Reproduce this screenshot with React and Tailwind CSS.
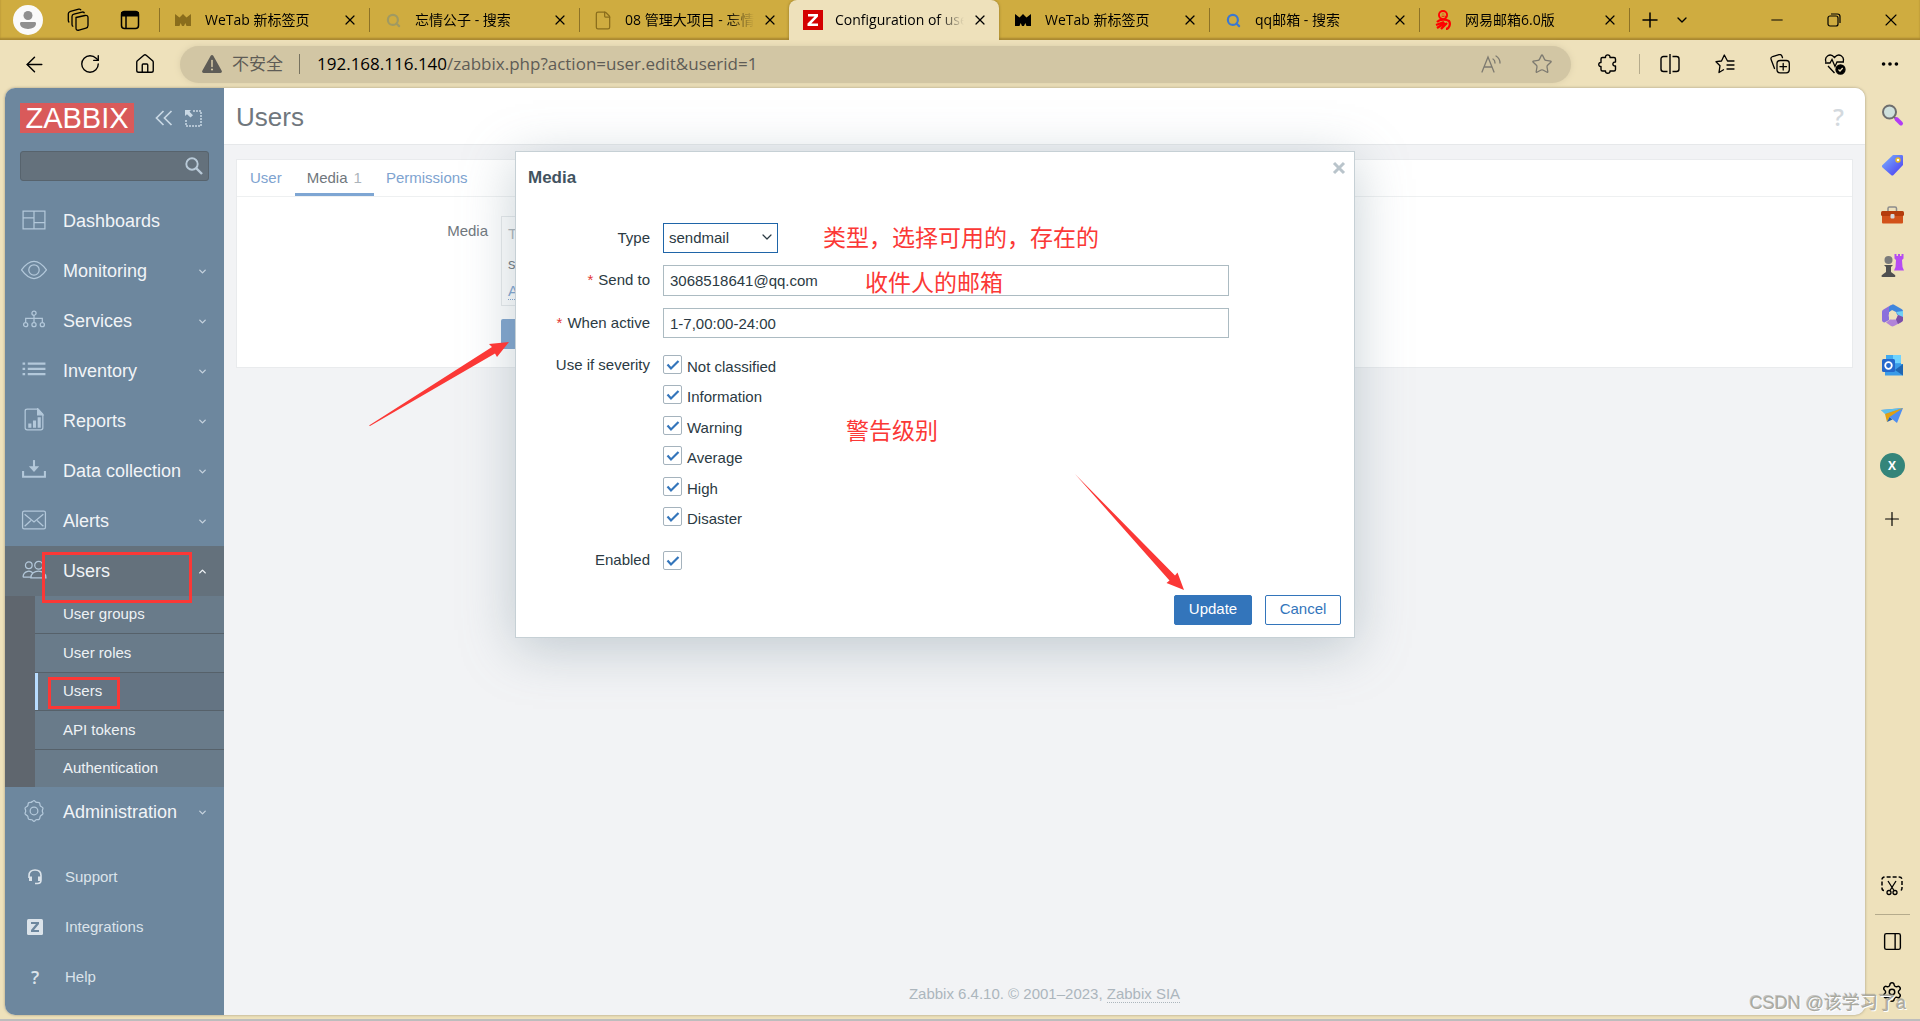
import {
  ArrowLeft,
  ChevronDown,
  ChevronUp,
  Ellipsis,
  File,
  House,
  Minus,
  PanelRight,
  Plus,
  RotateCw,
  Search,
  Settings,
  Star,
  X,
} from "lucide-react";

const uiFont = "font-['Open_Sans','Noto_Sans_CJK_SC',sans-serif]";
const pageFont = "font-['Liberation_Sans','Noto_Sans_CJK_SC',sans-serif]";

/* ---------- browser icons ---------- */

const Crown = ({ className }) => (
  <svg viewBox="0 0 16 14" className={`h-3.5 w-4 ${className}`} fill="currentColor">
    <path d="M0 1l4.500 3.500L8 1l3.500 3.500L16 1v12h-4.500L10.300 10 9 13H7L5.700 10 4.500 13H0z" />
  </svg>
);

const ZabbixFavicon = () => (
  <svg viewBox="0 0 20 20" className="h-5 w-5">
    <rect width="20" height="20" fill="#d40000" />
    <path d="M5 4h10v2.500L8.300 13.500H15V16H4.500v-2.500L11.500 6.500H5z" fill="#fff" />
  </svg>
);

const NeteaseFavicon = () => (
  <svg viewBox="0 0 18 20" className="h-5 w-4.5" fill="none">
    <circle cx="9" cy="5" r="5" fill="#f00" />
    <path d="M6.500 5h5c0-3-5-3-5 0 0 3 3.500 3 4.500 1.500" stroke="#cfac40" strokeWidth="1.300" />
    <path d="M3 12c3-3 9-3 12-1 2 3 0 8-3 8M2 15l8-3M3 18l8-5M7 19l6-6" stroke="#f00" strokeWidth="2.300" />
  </svg>
);

const Workspaces = () => (
  <svg viewBox="0 0 22 24" className="h-6 w-5.5" fill="none" stroke="currentColor" strokeWidth="1.300">
    <path d="M9 9.500l9-2c2-.4 3 .3 3 2v8c0 1.500-.5 2.200-2 2.600l-7 2c-2 .5-3-.2-3-1.800z" />
    <path d="M17.500 5.300c-.3-1-1.200-1.500-2.500-1.200L7 6.200C5.500 6.600 5 7.200 5 8.500v8c0 1 .5 1.700 1.300 2" />
    <path d="M14 2.200c-.3-.9-1.200-1.300-2.300-1L3.500 3.300C2 3.700 1.300 4.400 1.300 5.800v6.700c0 1 .4 1.600 1 1.900" />
  </svg>
);

const TabActions = () => (
  <svg viewBox="0 0 20 20" className="h-5 w-5" fill="none" stroke="currentColor" strokeWidth="1.500">
    <rect x="1.500" y="1.500" width="17" height="17" rx="3" />
    <path d="M2 3h16v2.500H2z" fill="currentColor" strokeWidth="2" />
    <path d="M6 6v12" />
  </svg>
);

const Warning = () => (
  <svg viewBox="0 0 20 18" className="h-4.5 w-5">
    <path d="M8.700.8c.6-1 2-1 2.600 0l8.400 15c.6 1-.1 2.200-1.300 2.200H1.600C.4 18-.3 16.800.3 15.800z" fill="#5e5c56" />
    <path d="M10 5.500v6" stroke="#d2c6a4" strokeWidth="1.600" strokeLinecap="round" />
    <circle cx="10" cy="14.500" r="1.100" fill="#d2c6a4" />
  </svg>
);

const ReadAloud = () => (
  <svg viewBox="0 0 20 18" className="h-4.5 w-5" fill="none" stroke="currentColor" strokeWidth="1.300" strokeLinecap="round">
    <path d="M1 17L7 2l6 15M3.200 12h7.600M12 4c1.500.8 2 2.200 2 4M15 1c2.500 1.500 4 4 4 7" />
  </svg>
);

const Extensions = () => (
  <svg viewBox="0 0 20 20" className="h-5 w-5" fill="none" stroke="currentColor" strokeWidth="1.400" strokeLinejoin="round">
    <path d="M4.500 3.500h3c-.5-3.500 5-3.500 4.500 0h4c1 0 1.500.5 1.500 1.500v3c-3.500-.5-3.500 4.500 0 4v3.500c0 1-.5 1.500-1.500 1.500h-4c.5 3-5 3-4.500 0h-3C3.500 17 3 16.500 3 15.500v-3c-3 .5-3-4.500 0-4V5c0-1 .5-1.500 1.500-1.500z" />
  </svg>
);

const SplitScreen = () => (
  <svg viewBox="0 0 20 20" className="h-5 w-5" fill="none" stroke="currentColor" strokeWidth="1.400">
    <path d="M7.500 2.500H3.500C2 2.500 1 3.500 1 5v10c0 1.500 1 2.500 2.500 2.500h4M12.500 2.500h4C18 2.500 19 3.500 19 5v10c0 1.500-1 2.500-2.500 2.500h-4M10 0v20" />
  </svg>
);

const Favorites = () => (
  <svg viewBox="0 0 20 20" className="h-5 w-5" fill="none" stroke="currentColor" strokeWidth="1.300" strokeLinejoin="round" strokeLinecap="round">
    <path d="M12.500 7L9.300 1 6.500 7 1 7.700l4 4L4 18.500l4.500-2.700M13 7h6M12 11h7M12 15h7" />
  </svg>
);

const Collections = () => (
  <svg viewBox="0 0 20 20" className="h-5 w-5" fill="none" stroke="currentColor" strokeWidth="1.300" strokeLinecap="round">
    <rect x="7" y="6.500" width="12.300" height="12.300" rx="3" />
    <path d="M13.200 9.500v6.500M10 12.700h6.500M4.500 14.500L1.200 5.800C.6 4.200 1.100 3 2.600 2.500l6.400-1.800c1.500-.4 2.500 0 3 1.500l.5 1.500" />
  </svg>
);

const Health = () => (
  <svg viewBox="0 0 22 22" className="h-5.5 w-5.5" fill="none" stroke="currentColor" strokeWidth="1.300">
    <path d="M2 9C0 4 6-1 10.500 4.500 15-1 21 4 19 9M1 10h5l2-3.500 3 7L13 9h7M4 13l6.500 7" />
    <circle cx="16.500" cy="16.500" r="4.500" fill="currentColor" />
    <path d="M14.500 16.500l1.500 1.500 2.700-3" stroke="#eee1bb" />
  </svg>
);

/* ---------- edge sidebar icons ---------- */

const edgeIcons = [
  {
    name: "Search",
    art: (
      <>
        <circle cx="8.500" cy="8" r="6.500" fill="#cfe0dc" stroke="#6e6e6e" strokeWidth="2" />
        <path d="M13 13l3 2.500" stroke="#6e6e6e" strokeWidth="2" />
        <path d="M15.500 15l4.500 4.500" stroke="#b23cf5" strokeWidth="4" strokeLinecap="round" />
      </>
    ),
  },
  {
    name: "Shopping",
    art: (
      <>
        <path d="M12 1h8.500c1 0 1.500.5 1.500 1.500V11L12.500 21c-.8.800-1.600.800-2.400 0L1.500 13.500c-.8-.8-.8-1.600 0-2.400z" fill="url(#tagFill)" />
        <circle cx="17" cy="6" r="2" fill="#fff" stroke="#e8b923" strokeWidth="1.400" />
      </>
    ),
  },
  {
    name: "Tools",
    art: (
      <>
        <path d="M7 7V4.500C7 3.500 7.500 3 8.500 3h5.500c1 0 1.500.5 1.500 1.500V7" fill="none" stroke="#8c8c8c" strokeWidth="1.500" />
        <rect x="1" y="10" width="21" height="9.500" rx="1" fill="#d2521a" />
        <rect x="0" y="7" width="23" height="5" rx="1.500" fill="#b43c0c" />
        <rect x="9.500" y="10" width="4" height="4.500" rx="1" fill="#d5d9dc" />
      </>
    ),
  },
  {
    name: "Games",
    art: (
      <>
        <path d="M13.500 0v4.500l1.500 1.500-.5 7-1.500 3.500h10l-1.500-3.500-.5-7L22.500 4.500V0h-2v2h-1.500V0h-2v2h-1.500V0z" fill="#b64cf2" />
        <circle cx="7.500" cy="6" r="4" fill="#7b7b7b" />
        <path d="M3 11h9l-2 2v5l4 3c1 1.500 0 2-1 2H1.500C.5 23 0 22 1 21l4-3v-5z" fill="#4f4f4f" />
      </>
    ),
  },
  {
    name: "Microsoft 365",
    art: (
      <>
        <path d="M10 1L2.500 5.500C1.500 6 1 7 1 8v8c0 1.500 1 2.500 2.500 2.500L8 16V8l4-3z" fill="#8a6fdc" />
        <path d="M8 3l2.500-2c1-.6 2-.6 3 0L20.500 5c1 .6 1.500 1.500 1.500 2.500V14l-6-3.500-1-2.500-4-2-3 2z" fill="#3f86dd" />
        <path d="M15 8l7-1v8l-3-2z" fill="#6fd0f5" />
        <path d="M22 13v2.500c0 1-.5 2-1.500 2.500l-7.500 4c-1 .5-2 .5-3 0l-5-3.500 4-3h6l2-4.500z" fill="#b183d8" />
        <path d="M22 13v2.500c0 1-.5 2-1.500 2.500L17 20l-2-4.500 2-4.500z" fill="#7a4fa8" />
        <circle cx="11.500" cy="11.500" r="3.800" fill="#eee1bb" />
      </>
    ),
  },
  {
    name: "Outlook",
    art: (
      <>
        <rect x="5" y="1" width="15" height="12" fill="#3fa9f0" />
        <path d="M12 1h8v8h-8z" fill="#6fd3ff" />
        <path d="M4 10h18v11.500H4z" fill="#3a9be8" />
        <path d="M22 10v11.500L14 16z" fill="#1f66b3" />
        <rect x="1" y="5" width="13" height="13" rx="1.500" fill="#2468cc" />
        <circle cx="7.500" cy="11.500" r="3.300" fill="none" stroke="#fff" strokeWidth="1.800" />
      </>
    ),
  },
  {
    name: "Drop",
    art: (
      <>
        <path d="M0 6l22-2-6 15-5-4z" fill="#4e8ef0" />
        <path d="M0 6l22-2L4 10z" fill="#5fc0ea" />
        <path d="M22 4L4 10l2 8 2.500-5z" fill="#e0a010" />
        <path d="M6 18l2.500-5 3 2.500z" fill="#1f5fb0" />
      </>
    ),
  },
];

/* ---------- zabbix menu icons ---------- */

const MenuIcon = ({ name }) => {
  const art = {
    Dashboards: <path d="M2 3h21v17H2zM12.500 3v17M2 9.500h10.500M12.500 14H23" />,
    Monitoring: (
      <>
        <path d="M.5 11.500Q12.500-5 24.500 11.500 12.500 28 .5 11.500z" />
        <circle cx="12.500" cy="11.500" r="5" />
      </>
    ),
    Services: (
      <>
        <circle cx="12.500" cy="5" r="2" />
        <circle cx="4.500" cy="16" r="2" />
        <circle cx="12.500" cy="16" r="2" />
        <circle cx="20.500" cy="16" r="2" />
        <path d="M12.500 7v7M4.500 14v-4h16v4" />
      </>
    ),
    Inventory: (
      <g strokeWidth="2.200">
        <path d="M6.500 5.500H23.500M6.500 10.500H23.500M6.500 15.500H23.500" />
        <path d="M1.500 5.500h2.500M1.500 10.500h2.500M1.500 15.500h2.500" />
      </g>
    ),
    Reports: (
      <>
        <path d="M6 1h10.500l4.500 5v13c0 1.500-.5 2-2 2H6c-1.500 0-2-.5-2-2V3c0-1.500.5-2 2-2z" />
        <path d="M16 1l5 5.500h-5z" fill="currentColor" />
        <path d="M8.500 19v-4M13 19v-7M17.500 19V9" strokeWidth="3" />
      </>
    ),
    "Data collection": (
      <>
        <path d="M12.500 2v9" strokeWidth="2" />
        <path d="M7.500 8h10l-5 5.500z" fill="currentColor" stroke="none" />
        <path d="M2 12.500V18h21v-5.500" strokeWidth="2" />
      </>
    ),
    Alerts: (
      <>
        <rect x="1.500" y="3" width="22" height="17" rx="1.500" />
        <path d="M3.500 6l9 7.500 9-7.500M3.500 17.500l6-5.500M21.500 17.500l-6-5.500" />
      </>
    ),
    Users: (
      <>
        <circle cx="7.500" cy="7" r="3.200" />
        <circle cx="17" cy="7" r="3.800" />
        <path d="M2 18.500c0-7 9-7 9-3.500M2 18.500h7M9.500 19c0-8.500 14.500-8.500 14.500 0z" />
      </>
    ),
    Administration: (
      <>
        <path d="M10.500 2.500c1 0 1-1 2-1s1 1 2 1.500 2 0 3 .5.500 2 1 3 2 1 2.500 2-.5 1.500-.5 3 1 2 .5 3-2 1-2.500 2 0 2-1 3-2 0-3 .5-1 1.500-2 1.500-1-1-2-1.500-2 0-3-.5-.5-2-1-3-2-1-2.500-2 .5-1.500.5-3-1-2-.5-3 2-1 2.500-2 0-2.500 1-3 2 0 3-.5z" />
        <circle cx="12.500" cy="11.500" r="3.700" />
      </>
    ),
  }[name];
  return (
    <svg viewBox="0 0 25 25" className="h-6.5 w-6.5 shrink-0 text-[#b3c8da]" fill="none" stroke="currentColor" strokeWidth="1.200">
      {art}
    </svg>
  );
};

const SupportIcon = () => (
  <svg viewBox="0 0 16 16" className="h-4 w-4" fill="none" stroke="currentColor" strokeWidth="1.600">
    <path d="M2 9V6.500C2 3 4.500 1 8 1s6 2 6 5.500V11c0 2-1.500 3.500-3.500 3.500H8" />
    <path d="M3.500 7.500V12M12.500 7.500V12" strokeWidth="3" />
  </svg>
);

const IntegrationsIcon = () => (
  <svg viewBox="0 0 16 16" className="h-4 w-4">
    <rect width="16" height="16" rx="1.500" fill="currentColor" />
    <path d="M4 3h8v2l-5 6h5v2H4v-2l5-6H4z" fill="#6d879e" />
  </svg>
);

/* ---------- data ---------- */

const tabs = [
  { title: "WeTab 新标签页", icon: <Crown className="text-[#8a6d1c]" />, line: true },
  { title: "忘情公子 - 搜索", icon: <Search size={15} strokeWidth={3.5} className="text-[#a09a62]" />, line: true },
  { title: "08 管理大项目 - 忘情公子", icon: <File size={21} strokeWidth={1.5} className="text-[#8a6d1c]" />, line: true },
  { title: "Configuration of users", icon: <ZabbixFavicon />, active: true },
  { title: "WeTab 新标签页", icon: <Crown className="text-black" /> },
  { title: "qq邮箱 - 搜索", icon: <Search size={15} strokeWidth={3.5} className="text-[#3b78d0]" />, line: true },
  { title: "网易邮箱6.0版", icon: <NeteaseFavicon />, line: true },
];

const menu = ["Dashboards", "Monitoring", "Services", "Inventory", "Reports", "Data collection", "Alerts"];
const userMenu = ["User groups", "User roles", "Users", "API tokens", "Authentication"];
const severities = ["Not classified", "Information", "Warning", "Average", "High", "Disaster"];

/* ---------- browser chrome ---------- */

const Tab = ({ title, icon, active, line }) => (
  <div
    className={`flex h-full max-w-[210px] flex-1 items-center pr-[11px] ${
      active ? "rounded-t-lg bg-[#eee1bb] shadow-[0_0_3px_#8d7226] [clip-path:inset(-4px_-4px_0_-4px)]" : ""
    }`}
  >
    <span className={`h-6 w-px ${line ? "bg-[#8d7226]" : ""}`} />
    <span className="ml-[13px] flex w-5 shrink-0 justify-center">{icon}</span>
    <span className="ml-3 flex-1 overflow-hidden text-sm whitespace-nowrap [mask-image:linear-gradient(to_right,#000_80%,transparent)]">
      {title}
    </span>
    <button aria-label="Close tab" className="ml-2">
      <X size={16} strokeWidth={1.8} />
    </button>
  </div>
);

const TabBar = () => (
  <div className="flex h-10 shrink-0 items-center bg-[#cfac40] shadow-[inset_0_-2px_2px_#a88730]">
    <div className="flex w-[159px] items-center pl-[13px]">
      <button aria-label="Profile" className="flex h-[30px] w-[30px] items-center justify-center rounded-full bg-[#fafafa]">
        <svg viewBox="0 0 16 18" className="h-4.5 w-4" fill="#8f8f8f">
          <circle cx="8" cy="4.500" r="4.500" />
          <path d="M1.500 11h13c1 0 1.500.6 1.500 1.600C16 16 12.500 18 8 18s-8-2-8-5.400C0 11.600.5 11 1.500 11z" />
        </svg>
      </button>
      <button aria-label="Workspaces" className="ml-6">
        <Workspaces />
      </button>
      <button aria-label="Tab actions" className="ml-[31px]">
        <TabActions />
      </button>
    </div>
    {tabs.map((tab, i) => (
      <Tab key={i} {...tab} />
    ))}
    <span className="h-6 w-px bg-[#8d7226]" />
    <button aria-label="New tab" className="ml-2">
      <Plus size={24} strokeWidth={1.5} />
    </button>
    <button aria-label="Tab list" className="ml-3">
      <ChevronDown size={16} strokeWidth={2} />
    </button>
    <div className="ml-auto flex items-center pr-px">
      <button aria-label="Minimize" className="flex w-[57px] justify-center">
        <Minus size={18} strokeWidth={1.3} />
      </button>
      <button aria-label="Restore" className="flex w-[57px] justify-center">
        <svg viewBox="0 0 14 14" className="h-3.5 w-3.5" fill="none" stroke="currentColor" strokeWidth="1.200">
          <rect x="1" y="3" width="10" height="10" rx="2" />
          <path d="M4 1h6.500C12.300 1 13 2 13 3.500V10" />
        </svg>
      </button>
      <button aria-label="Close" className="flex w-[57px] justify-center">
        <X size={20} strokeWidth={1.3} />
      </button>
    </div>
  </div>
);

const ToolButton = ({ label, children }) => (
  <button aria-label={label} className="flex w-[55px] shrink-0 justify-center">
    {children}
  </button>
);

const Toolbar = () => (
  <div className="flex h-12 shrink-0 items-center bg-[#eee1bb] pr-[3px] pl-[7px]">
    <ToolButton label="Back">
      <ArrowLeft size={25} strokeWidth={1.4} />
    </ToolButton>
    <ToolButton label="Refresh">
      <RotateCw size={22} strokeWidth={1.5} />
    </ToolButton>
    <ToolButton label="Home">
      <House size={22} strokeWidth={1.5} />
    </ToolButton>
    <div className="mr-1.5 ml-2 flex h-[37px] flex-1 items-center rounded-full bg-[#d2c6a4] pl-[22px] text-[#5e5c56] shadow-[0_0_6px_#d9cda9]">
      <Warning />
      <span className="ml-2.5 text-[17px]">不安全</span>
      <span className="ml-4 h-5 w-px bg-[#77725f]" />
      <span className="ml-[17px] flex-1 text-[17px]">
        <span className="text-black">192.168.116.140</span>/zabbix.php?action=user.edit&amp;userid=1
      </span>
      <button aria-label="Read aloud" className="mr-[30px] text-[#7d7a70]">
        <ReadAloud />
      </button>
      <button aria-label="Favorite" className="mr-[18px] text-[#7d7a70]">
        <Star size={22} strokeWidth={1.4} />
      </button>
    </div>
    <button aria-label="Extensions" className="flex w-[62px] justify-center">
      <Extensions />
    </button>
    <span className="mr-0.5 h-5 w-px bg-[#b5ab8c]" />
    <ToolButton label="Split screen">
      <SplitScreen />
    </ToolButton>
    <ToolButton label="Favorites">
      <Favorites />
    </ToolButton>
    <ToolButton label="Collections">
      <Collections />
    </ToolButton>
    <ToolButton label="Browser essentials">
      <Health />
    </ToolButton>
    <ToolButton label="More">
      <Ellipsis size={22} strokeWidth={2} />
    </ToolButton>
  </div>
);

const EdgeSidebar = () => (
  <aside className="relative flex w-[55px] shrink-0 flex-col items-center pt-0.5 pr-px">
    {edgeIcons.map(({ name, art }) => (
      <button key={name} aria-label={name} className="flex h-[50px] w-full items-center justify-center">
        <svg viewBox="0 0 23 23" className="h-[23px] w-[23px]">
          <defs>
            <linearGradient id="tagFill" x1="0" y1="0" x2="1" y2="1">
              <stop offset="0" stopColor="#7ab6ff" />
              <stop offset="1" stopColor="#4a35f0" />
            </linearGradient>
          </defs>
          {art}
        </svg>
      </button>
    ))}
    <button className="mt-[13px] flex h-[25px] w-[25px] items-center justify-center rounded-full bg-[#34857a] text-xs font-bold text-white">
      X
    </button>
    <button aria-label="Add" className="mt-[30px]">
      <Plus size={22} strokeWidth={1.3} />
    </button>
    <button aria-label="Screenshot" className="mt-auto">
      <svg viewBox="0 0 22 20" className="h-5 w-5.5" fill="none" stroke="currentColor" strokeWidth="1.500">
        <path d="M3 14.500C1.500 14.500 1 13.500 1 12V4c0-2 .8-3 3-3h14c2 0 3 1 3 3v8c0 1.500-.5 2.500-2 2.500" strokeDasharray="4 2" />
        <path d="M7 5l6 9.500M15 5L9 14.500" strokeWidth="1.300" />
        <circle cx="8" cy="16.500" r="2" strokeWidth="1.300" />
        <circle cx="14" cy="16.500" r="2" strokeWidth="1.300" />
      </svg>
    </button>
    <span className="mt-4.5 h-px w-[35px] bg-[#b5ab8c]" />
    <button aria-label="Sidebar" className="mt-4">
      <PanelRight size={21} strokeWidth={1.6} />
    </button>
    <button aria-label="Settings" className="mt-[29px] mb-3">
      <Settings size={22} strokeWidth={1.6} />
    </button>
    <p
      className={`absolute right-3.5 bottom-0 text-lg leading-6 whitespace-nowrap text-[#a9a99f] [text-shadow:1px_1px_0_#fff,-1px_-1px_0_#77777766] ${pageFont}`}
    >
      CSDN @该学习了a
    </p>
  </aside>
);

/* ---------- zabbix page ---------- */

const MenuRow = ({ name, open }) => (
  <a
    href="#"
    className={`flex h-[50px] items-center pr-4 pl-4 text-lg text-[#f1f4f7] ${open ? "bg-[#64717c]" : ""}`}
  >
    <MenuIcon name={name} />
    <span className="ml-4 flex-1 whitespace-nowrap">{name}</span>
    {open && <ChevronUp size={11} strokeWidth={3} />}
    {!open && name !== "Dashboards" && <ChevronDown size={11} strokeWidth={3} className="text-[#c5d2dd]" />}
  </a>
);

const Sidebar = () => (
  <nav className="flex w-[219px] shrink-0 flex-col overflow-hidden rounded-l-[10px] bg-[#6d879e]">
    <div className="mt-[15px] flex items-center pr-[22px] pl-[15px]">
      <a href="#" className="flex h-[30px] w-[114px] items-center justify-center bg-[#d95a5a] text-[29px] leading-none text-white">
        ZABBIX
      </a>
      <button aria-label="Collapse sidebar" className="ml-[21px] text-[#c9d8e4]">
        <svg viewBox="0 0 18 16" className="h-4 w-4.5" fill="none" stroke="currentColor" strokeWidth="1.700">
          <path d="M8.500 1l-7 7 7 7M16.500 1l-7 7 7 7" />
        </svg>
      </button>
      <button aria-label="Hide sidebar" className="ml-3 text-[#c9d8e4]">
        <svg viewBox="0 0 17 17" className="h-[17px] w-[17px]" fill="none" stroke="currentColor" strokeWidth="1.500">
          <path d="M8 1h8v15H1V9" strokeDasharray="2 1" />
          <path d="M0 0h6L4.500 1.800 8 5.200 5.500 7.500 2 4.200 0 6z" fill="currentColor" stroke="none" />
        </svg>
      </button>
    </div>
    <div className="mx-[15px] mt-[18px] flex h-[30px] items-center rounded-[3px] border border-[#57636d] bg-[#64717c]">
      <input aria-label="Search" className="w-full flex-1 bg-transparent px-2 text-[15px] text-white outline-none" />
      <button aria-label="Search" className="mr-[5px] text-[#b9cad8]">
        <svg viewBox="0 0 18 18" className="h-4.5 w-4.5" fill="none" stroke="currentColor" strokeWidth="1.900">
          <circle cx="7" cy="7" r="5.700" />
          <path d="M11 11l6 6" strokeWidth="2.400" />
        </svg>
      </button>
    </div>

    <div className="mt-[15px]">
      {menu.map((name) => (
        <MenuRow key={name} name={name} />
      ))}
      <div className="relative">
        <MenuRow name="Users" open />
        <div className="flex bg-[#5f666e] pl-[30px]">
          <ul className="flex h-[191px] flex-1 flex-col divide-y divide-[#56616a] bg-[#697b8a]">
            {userMenu.map((name) => (
              <li key={name} className={`flex-1 ${name === "Users" ? "bg-[#647483]" : ""}`}>
                <a
                  href="#"
                  className={`flex h-full items-center text-[15px] text-[#eef2f5] ${
                    name === "Users" ? "border-l-3 border-[#b8dcff] pl-[25px]" : "pl-7"
                  }`}
                >
                  {name}
                </a>
              </li>
            ))}
          </ul>
        </div>
        <span className="absolute top-1.5 left-[37px] h-[51px] w-[150px] border-3 border-[#fb3836]" />
        <span className="absolute top-[131px] left-[43px] h-8 w-[72px] border-3 border-[#fb3836]" />
      </div>
      <MenuRow name="Administration" />
    </div>

    <div className="mt-[15px] text-[15px] text-[#dbe3ea]">
      <a href="#" className="flex h-[50px] items-center gap-[22px] pl-[22px]">
        <SupportIcon />
        Support
      </a>
      <a href="#" className="flex h-[50px] items-center gap-[22px] pl-[22px]">
        <IntegrationsIcon />
        Integrations
      </a>
      <a href="#" className="flex h-[50px] items-center gap-[22px] pl-[22px]">
        <span className="w-4 text-center font-['Open_Sans',sans-serif] text-lg font-semibold">?</span>
        Help
      </a>
    </div>
  </nav>
);

const UserForm = () => (
  <div className="mx-3 mt-3.5 border border-[#e9ebed] bg-white">
    <div className="flex h-[37px] items-stretch border-b border-[#eef0f1] text-[15px] text-[#7ea3d0]">
      <a href="#" className="flex items-center px-[13px]">User</a>
      <a href="#" className="flex items-center border-b-3 border-[#7ea6d3] px-3 pt-[3px] text-[#70777d]">
        Media<span className="ml-1.5 text-[#acb4ba]">1</span>
      </a>
      <a href="#" className="flex items-center px-3">Permissions</a>
    </div>
    <div className="flex pt-[19px] pb-[18px] text-[15px] text-[#70777d]">
      <div className="w-[251px] pt-1.5 text-right leading-[18px]">Media</div>
      <div className="ml-[13px]">
        <table className="w-[800px] border border-[#e6e9eb] text-left leading-5">
          <thead>
            <tr className="h-[34px]">
              <th className="px-1.5 font-normal text-[#acb4ba]">Type</th>
            </tr>
          </thead>
          <tbody>
            <tr className="h-[27px]">
              <td className="px-1.5">sendmail</td>
            </tr>
            <tr className="h-[28px]">
              <td className="px-1.5">
                <a href="#" className="border-b border-dotted border-[#7ea3d0] text-[#7ea3d0]">Add</a>
              </td>
            </tr>
          </tbody>
        </table>
        <button aria-label="Update" className="mt-[13px] block h-[30px] w-[78px] rounded-xs bg-[#7ea3cd]" />
      </div>
    </div>
  </div>
);

const Checkbox = ({ id }) => (
  <span className="relative flex h-[19px] w-[19px] shrink-0">
    <input
      id={id}
      type="checkbox"
      defaultChecked
      className="peer h-full w-full appearance-none rounded-xs border border-[#a5b3bd] bg-white"
    />
    <svg
      viewBox="0 0 19 19"
      className="pointer-events-none absolute inset-0 hidden peer-checked:block"
      fill="none"
      stroke="#3375bb"
      strokeWidth="2.200"
    >
      <path d="M4.500 9.500l3.500 4 7.500-7.500" />
    </svg>
  </span>
);

const Label = ({ htmlFor, required, children }) => (
  <label htmlFor={htmlFor} className="w-[134px] shrink-0 text-right">
    {required && <span className="mr-[5px] text-[#e33734]">*</span>}
    {children}
  </label>
);

const Note = ({ className, children }) => (
  <p className={`pointer-events-none absolute text-[23px] leading-7 whitespace-nowrap text-[#fb3836] ${className}`}>
    {children}
  </p>
);

const MediaDialog = () => (
  <div
    role="dialog"
    aria-label="Media"
    className="relative mt-[63px] h-fit w-[840px] border border-[#c6d0d5] bg-white text-[15px] text-[#2b3a43] shadow-[0_10px_50px_#768d9966]"
  >
    <div className="flex items-start justify-between pt-[11px] pr-2.5 pl-3">
      <h4 className="mt-[3px] text-[17px] leading-6 font-bold text-[#42535f]">Media</h4>
      <button aria-label="Close" className="text-[#b9c4cb]">
        <svg viewBox="0 0 14 14" className="m-[-2px] h-3.5 w-3.5" fill="none" stroke="currentColor" strokeWidth="3">
          <path d="M2 2l10 10M12 2L2 12" />
        </svg>
      </button>
    </div>

    <form className="mt-[33px] flex flex-col">
      <div className="flex items-center">
        <Label htmlFor="type">Type</Label>
        <div className="relative ml-[13px]">
          <select
            id="type"
            className="block h-[30px] w-[115px] appearance-none border border-[#1f65a8] bg-white pl-[5px] outline-none"
          >
            <option>sendmail</option>
          </select>
          <ChevronDown size={16} strokeWidth={1.8} className="pointer-events-none absolute top-[6px] right-[3px]" />
        </div>
      </div>
      <div className="mt-3 flex items-center">
        <Label htmlFor="sendto" required>Send to</Label>
        <input
          id="sendto"
          defaultValue="3068518641@qq.com"
          className="ml-[13px] h-[31px] w-[566px] border border-[#acbbc2] px-1.5 outline-none"
        />
      </div>
      <div className="mt-3 flex items-center">
        <Label htmlFor="period" required>When active</Label>
        <input
          id="period"
          defaultValue="1-7,00:00-24:00"
          className="ml-[13px] h-[30px] w-[566px] border border-[#acbbc2] px-1.5 outline-none"
        />
      </div>
      <div className="mt-[17px] flex items-start leading-5">
        <span className="w-[134px] shrink-0 text-right">Use if severity</span>
        <div className="ml-[13px] flex h-[172px] flex-col justify-between">
          {severities.map((name) => (
            <div key={name} className="flex h-5 items-start">
              <Checkbox id={name} />
              <label htmlFor={name} className="ml-[5px] pt-0.5">
                {name}
              </label>
            </div>
          ))}
        </div>
      </div>
      <div className="mt-[22px] flex items-center">
        <Label htmlFor="enabled">Enabled</Label>
        <span className="ml-[13px]">
          <Checkbox id="enabled" />
        </span>
      </div>
      <div className="mt-[23px] mr-[13px] mb-3 flex justify-end gap-[13px]">
        <button type="button" className="h-[30px] w-[78px] rounded-xs border border-[#3375bb] bg-[#3375bb] text-white">
          Update
        </button>
        <button type="button" className="h-[30px] w-[76px] rounded-xs border border-[#3375bb] text-[#3375bb]">
          Cancel
        </button>
      </div>
    </form>

    <Note className="top-[72px] left-[307px]">类型，选择可用的，存在的</Note>
    <Note className="top-[117px] left-[349px]">收件人的邮箱</Note>
    <Note className="top-[265px] left-[330px]">警告级别</Note>
    <svg viewBox="0 0 110 117" className="pointer-events-none absolute top-[322px] left-[559px] h-[117px] w-[110px]" fill="#fb3836">
      <path d="M0 0L100 101.500l2.500-3L109 116l-17.500-7 3-2.500z" />
    </svg>
    <svg viewBox="0 0 140 84" className="pointer-events-none absolute top-[190px] left-[-147px] h-[84px] w-[140px]" fill="#fb3836">
      <path d="M0 83.500L123 5l-3-3L140 0l-12 15-2-3.500L1 84z" />
    </svg>
  </div>
);

export default function App() {
  return (
    <div className={`flex h-screen flex-col overflow-hidden border-b-2 border-[#bdbdbd] bg-[#eee1bb] text-black ${uiFont}`}>
      <TabBar />
      <Toolbar />
      <div className="flex min-h-0 flex-1 pb-1 pl-[5px]">
        <div className={`relative flex flex-1 rounded-[10px] bg-[#f2f3f5] shadow-[0_0_3px_#a39a7e] ${pageFont}`}>
          <Sidebar />
          <main className="flex min-w-0 flex-1 flex-col">
            <header className="flex h-[57px] items-center justify-between rounded-tr-[10px] border-b border-[#e6e8ea] bg-white pt-0.5 pr-[21px] pl-3">
              <h1 className="text-[26px]/8 text-[#70777d]">Users</h1>
              <a href="#" aria-label="Help" className="font-['Open_Sans',sans-serif] text-2xl/6 font-semibold text-[#d3d9de]">
                ?
              </a>
            </header>
            <UserForm />
            <footer className="mt-auto pb-2.5 text-center text-[15px] text-[#acb6bd]">
              Zabbix 6.4.10. © 2001–2023,{" "}
              <a href="#" className="border-b border-dotted border-[#acb6bd]">
                Zabbix SIA
              </a>
            </footer>
          </main>
          <div className="absolute inset-0 flex justify-center">
            <MediaDialog />
          </div>
        </div>
        <EdgeSidebar />
      </div>
    </div>
  );
}
